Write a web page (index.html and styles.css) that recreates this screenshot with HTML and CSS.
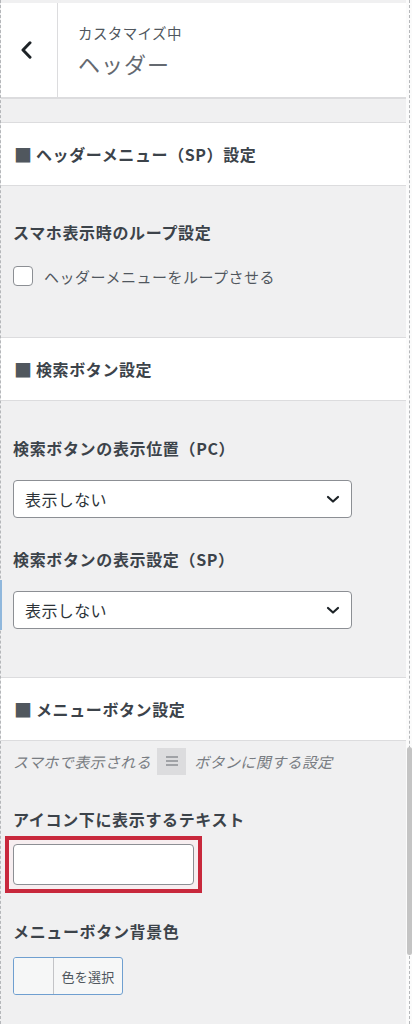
FILE: index.html
```html
<!DOCTYPE html>
<html lang="ja">
<head>
<meta charset="utf-8">
<title>カスタマイズ中 ヘッダー</title>
<link rel="stylesheet" href="styles.css">
</head>
<body>
<div class="frame">
  <div class="panel">
    <header class="head">
      <div class="back">
        <svg width="12" height="18" viewBox="0 0 12 18"><path d="M10 1.8 L3 9 L10 16.2" fill="none" stroke="#1d2327" stroke-width="3" stroke-linecap="round" stroke-linejoin="round"/></svg>
      </div>
      <div class="head-text">
        <span class="sub">カスタマイズ中</span>
        <span class="ttl">ヘッダー</span>
      </div>
    </header>
    <div class="spacer"></div>

    <section class="sec">
      <h3 class="sec-title"><span class="sq">■</span>ヘッダーメニュー（SP）設定</h3>
      <div class="sec-body b1">
        <div class="label">スマホ表示時のループ設定</div>
        <label class="check-row"><span class="checkbox"></span><span class="check-text">ヘッダーメニューをループさせる</span></label>
      </div>
    </section>

    <section class="sec">
      <h3 class="sec-title"><span class="sq">■</span>検索ボタン設定</h3>
      <div class="sec-body b2">
        <div class="label">検索ボタンの表示位置（PC）</div>
        <div class="select g20"><span>表示しない</span><svg width="14" height="9" viewBox="0 0 14 9"><path d="M2 2 L7 6.5 L12 2" fill="none" stroke="#1d2327" stroke-width="2.2" stroke-linecap="round" stroke-linejoin="round"/></svg></div>
        <div class="label g29">検索ボタンの表示設定（SP）</div>
        <div class="select g20"><span>表示しない</span><svg width="14" height="9" viewBox="0 0 14 9"><path d="M2 2 L7 6.5 L12 2" fill="none" stroke="#1d2327" stroke-width="2.2" stroke-linecap="round" stroke-linejoin="round"/></svg></div>
      </div>
    </section>

    <section class="sec">
      <h3 class="sec-title"><span class="sq">■</span>メニューボタン設定</h3>
      <div class="sec-body b3">
        <p class="desc">スマホで表示される<span class="menu-ico"><svg width="14" height="12" viewBox="0 0 14 12"><path d="M1 2h12M1 6h12M1 10h12" stroke="#8c8f94" stroke-width="1.4"/></svg></span>ボタンに関する設定</p>
        <div class="label g35">アイコン下に表示するテキスト</div>
        <div class="redbox"><div class="text-input"></div></div>
        <div class="label g26">メニューボタン背景色</div>
        <div class="color-btn"><span class="swatch"></span><span class="color-text">色を選択</span></div>
      </div>
    </section>
    <span class="edge-blue"></span>
  </div>
  <div class="gutter"><span class="scroll"></span></div>
</div>
</body>
</html>
```

FILE: styles.css
```css
* { box-sizing: border-box; }
html, body { margin: 0; padding: 0; }
body {
  background: #fafafa;
  font-family: "Noto Sans CJK JP", "Noto Sans", sans-serif;
  color: #3c434a;
}
.frame {
  display: flex;
  width: 412px;
  height: 1024px;
  overflow: hidden;
}
.panel {
  position: relative;
  width: 406px;
  flex: none;
  background: #f0f0f1;
  border-left: 1px dashed #b5b7ba;
  padding-top: 3px;
}
.head {
  display: flex;
  height: 96px;
  background: #fff;
  border-bottom: 2px solid #dcdcde;
}
.back {
  width: 57px;
  flex: none;
  display: flex;
  align-items: center;
  justify-content: center;
  padding-right: 7px;
  border-right: 1px solid #dcdcde;
}
.head-text {
  display: flex;
  flex-direction: column;
  padding: 20px 0 0 20px;
  color: #50575e;
}
.sub {
  font-size: 14.5px;
  line-height: 20px;
  letter-spacing: 0.4px;
}
.ttl {
  margin-top: 5px;
  font-size: 22px;
  line-height: 30px;
  letter-spacing: 1px;
  color: #646970;
}
.spacer { height: 23px; }
.sec-title {
  margin: 0;
  height: 64px;
  line-height: 62px;
  background: #fff;
  border-top: 1px solid #dcdcde;
  border-bottom: 1px solid #dcdcde;
  padding-left: 13px;
  font-size: 16px;
  font-weight: 700;
  letter-spacing: 0.6px;
  color: #3c434a;
}
.sq {
  display: inline-block;
  font-size: 18px;
  line-height: 18px;
  vertical-align: -1px;
  color: #50575e;
  margin-right: 4px;
  letter-spacing: 0;
}
.sec-body { padding: 0 12px; }
.b1 { padding-top: 34px; padding-bottom: 51px; }
.b2 { padding-top: 35px; padding-bottom: 48px; }
.b3 { padding-top: 9px; padding-bottom: 40px; }
.label {
  font-size: 16px;
  line-height: 24px;
  font-weight: 700;
  letter-spacing: 0.65px;
  color: #3c434a;
}
.g29 { margin-top: 29px; }
.g35 { margin-top: 35px; }
.g26 { margin-top: 26px; }
.g20 { margin-top: 20px; }
.check-row {
  display: flex;
  align-items: center;
  gap: 11px;
  margin-top: 22px;
  height: 20px;
}
.checkbox {
  width: 20px;
  height: 20px;
  border: 1px solid #8c8f94;
  border-radius: 4px;
  background: #fff;
}
.check-text {
  font-size: 15px;
  letter-spacing: 0.5px;
  color: #50575e;
}
.select {
  display: flex;
  align-items: center;
  justify-content: space-between;
  width: 339px;
  height: 38px;
  padding: 0 11px 0 11px;
  background: #fff;
  border: 1px solid #8c8f94;
  border-radius: 4px;
  font-size: 16px;
  letter-spacing: 0.4px;
  color: #2c3338;
}
.desc {
  margin: 0;
  display: flex;
  align-items: center;
  height: 22px;
  font-size: 15px;
  font-style: italic;
  letter-spacing: 0.4px;
  color: #787c82;
}
.menu-ico {
  display: inline-flex;
  align-items: center;
  justify-content: center;
  width: 29px;
  height: 27px;
  margin: 0 8px 0 6px;
  background: #dcdcde;
}
.redbox {
  margin: 5px 0 0 -8px;
  width: 197px;
  padding: 4px;
  border: 4px solid #c8283c;
  background: #f7eef0;
}
.text-input {
  width: 181px;
  height: 41px;
  background: #fff;
  border: 1px solid #8c8f94;
  border-radius: 4px;
}
.color-btn {
  display: flex;
  margin-top: 14px;
  width: 110px;
  height: 38px;
  border: 1px solid #6f9fd0;
  border-radius: 3px;
  overflow: hidden;
  background: #f6f7f7;
}
.swatch {
  width: 40px;
  flex: none;
  border-right: 1px solid #c3c4c7;
  background: #f6f7f7;
}
.color-text {
  flex: 1;
  display: flex;
  align-items: center;
  justify-content: center;
  font-size: 13px;
  color: #50575e;
  letter-spacing: 0.3px;
}
.edge-blue {
  position: absolute;
  left: -1px;
  top: 580px;
  width: 2px;
  height: 50px;
  background: #8fb7dc;
}
.gutter {
  position: relative;
  flex: 1;
  background: #fbfbfb;
}
.gutter::before {
  content: "";
  position: absolute;
  left: 3px;
  top: 0;
  bottom: 0;
  border-left: 1px dashed #b5b7ba;
}
.scroll {
  position: absolute;
  left: 1px;
  top: 747px;
  width: 5px;
  height: 208px;
  border-radius: 3px;
  background: #c4c4c4;
}
```
